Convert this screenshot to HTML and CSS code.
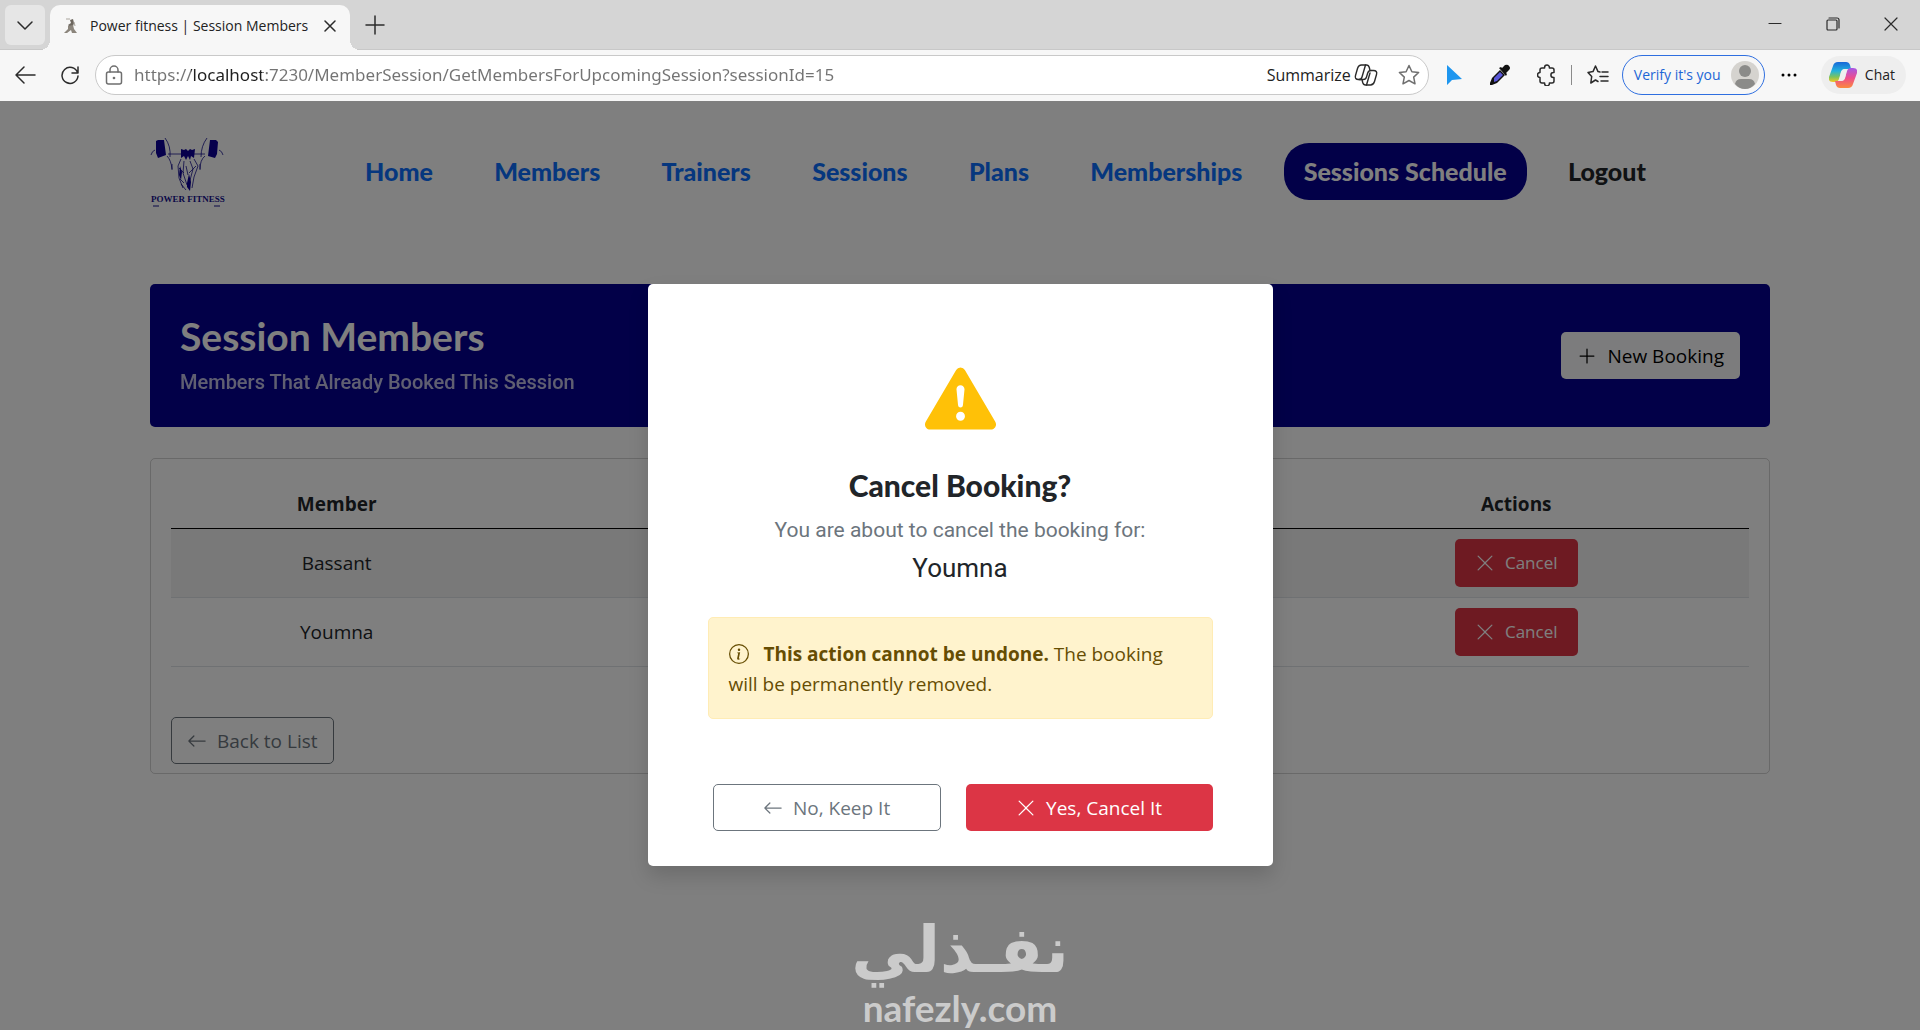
FILE: index.html
```html
<!DOCTYPE html>
<html lang="en">
<head>
    <meta charset="UTF-8">
    <meta name="viewport" content="width=device-width, initial-scale=1.0">
    <title>Power fitness | Session Members</title>
    <link rel="stylesheet" href="styles.css">
</head>
<body>
    <!-- Browser window -->
    <header class="browser">
        <div class="tab-strip">
            <button class="tab-search" aria-label="Search tabs">
                <svg width="18" height="18" viewBox="0 0 18 18" class="line"><path d="M2 6l7 7 7-7"/></svg>
            </button>
            <div class="tab">
                <svg class="favicon" width="16" height="18" viewBox="0 0 16 18">
                    <path d="M7 3l3-1 1 4-1 3-3 1-2-2 3-2z" fill="#6d675f"/>
                    <path d="M5 9l5-1 1 4 3 4H9l-1-3-4 3H1l4-4z" fill="#8b857c"/>
                    <path d="M3 2h4M11 5l1 4" stroke="#a9a49c" fill="none"/>
                </svg>
                <span class="tab-title">Power fitness | Session Members</span>
                <button class="icon-btn tab-close" aria-label="Close tab">
                    <svg width="12" height="12" viewBox="0 0 12 12" class="line"><path d="M1 1l10 10M11 1L1 11"/></svg>
                </button>
            </div>
            <button class="icon-btn new-tab" aria-label="New tab">
                <svg width="20" height="20" viewBox="0 0 20 20" class="line"><path d="M10 1v18M1 10h18"/></svg>
            </button>
            <div class="window-controls">
                <button class="icon-btn" aria-label="Minimize">
                    <svg width="14" height="14" viewBox="0 0 14 14" class="line thin"><path d="M1 6.5h12"/></svg>
                </button>
                <button class="icon-btn" aria-label="Restore">
                    <svg width="14" height="14" viewBox="0 0 14 14" class="line thin"><rect x="1" y="3" width="10" height="10" rx="1"/><path d="M3 1h8q2 0 2 2v8"/></svg>
                </button>
                <button class="icon-btn" aria-label="Close">
                    <svg width="14" height="14" viewBox="0 0 14 14" class="line thin"><path d="M1 1l12 12M13 1L1 13"/></svg>
                </button>
            </div>
        </div>
        <div class="toolbar">
            <button class="icon-btn" aria-label="Back">
                <svg width="22" height="20" viewBox="0 0 22 20" class="line"><path d="M10 2L2 10l8 8M2 10h19"/></svg>
            </button>
            <button class="icon-btn reload" aria-label="Reload">
                <svg width="20" height="20" viewBox="0 0 20 20" class="line"><path d="M17.5 7.5A8 8 0 1 0 18 11M18 2v6h-6"/></svg>
            </button>
            <form class="address-bar">
                <svg width="18" height="20" viewBox="0 0 18 20" class="line grey"><rect x="1.5" y="7" width="15" height="12" rx="2"/><path d="M5 7V5a4 4 0 0 1 8 0v2"/><circle cx="9" cy="13" r=".6"/></svg>
                <input class="url" type="text" aria-label="Address" value="https://localhost:7230/MemberSession/GetMembersForUpcomingSession?sessionId=15">
                <button type="button" class="summarize">Summarize
                    <svg width="24" height="22" viewBox="0 0 24 22" class="line copilot">
                        <path d="M7 15.500H4.500c-2.500 0-3.800-1.300-3-4L3.500 4.500c.7-2.300 2-3.500 4-3.500h5c1.800 0 2.300.8 2.800 2.500l.5 2M17 6.500h2.500c2.500 0 3.800 1.300 3 4l-2 7c-.7 2.300-2 3.500-4 3.500h-5c-1.800 0-2.300-.8-2.800-2.500l-.5-2"/>
                        <path d="M11.500 1L8 13c-.5 1.700-1.200 2.500-3 2.500h4.500c1.600 0 2.500-.7 3-2.500l1.200-4c.5-1.700 1.200-2.500 3.300-2.500M12.500 21L16 9"/>
                    </svg>
                </button>
                <button type="button" class="icon-btn" aria-label="Add to favorites">
                    <svg width="22" height="22" viewBox="0 0 22 22" class="line grey"><path d="M11 1.500l2.900 6.200 6.700.8-4.900 4.600 1.300 6.700-6-3.300-6 3.300 1.300-6.700L1.400 8.500l6.700-.8z"/></svg>
                </button>
            </form>
            <div class="extensions">
                <button class="icon-btn" aria-label="Cursor">
                    <svg width="18" height="22" viewBox="0 0 18 22"><path d="M2 1v20l5-5 10-1z" fill="#1e96ef"/></svg>
                </button>
                <button class="icon-btn" aria-label="Color picker">
                    <svg width="22" height="22" viewBox="0 0 22 22">
                        <path d="M3 14l8-8 5 5-8 8-5 2-2 0 0-2z" fill="#111"/>
                        <path d="M5 14l6-6 3 3-6 6-3 1z" fill="#5a57d8"/>
                        <path d="M10 4l2-1 1 1 3-3q3-1 4 1 2 2 0 4l-3 3 1 1-1 2z" fill="#111"/>
                    </svg>
                </button>
                <button class="icon-btn" aria-label="Extensions">
                    <svg width="20" height="22" viewBox="0 0 20 22" class="line"><path d="M5 4h2.600V3.500a2.400 2.400 0 0 1 4.800 0V4H15a2 2 0 0 1 2 2v2.500h-.6a2.500 2.500 0 0 0 0 5h.6V17a2 2 0 0 1-2 2h-2.600v.5a2.400 2.400 0 0 1-4.800 0V19H5a2 2 0 0 1-2-2v-3.500a2.500 2.500 0 0 1 0-5V6a2 2 0 0 1 2-2z"/></svg>
                </button>
            </div>
            <span class="separator"></span>
            <button class="icon-btn favorites" aria-label="Favorites">
                <svg width="22" height="20" viewBox="0 0 22 20" class="line"><path d="M13 7l-2-.4L8.500 1 6 6.600l-5 .8L4.700 11.500 3.800 18l4.700-3 2.500 1.500M15 7h6M13 11.500h8M14 16h7"/></svg>
            </button>
            <button class="profile">Verify it's you
                <svg width="28" height="28" viewBox="0 0 28 28"><circle cx="14" cy="14" r="14" fill="#d5d3cf"/><circle cx="14" cy="10" r="6" fill="#8b8b89"/><path d="M4 23q1-5 6-5h8q5 0 6 5-4 5-10 5T4 23z" fill="#8b8b89"/></svg>
            </button>
            <button class="icon-btn more" aria-label="Settings and more">
                <svg width="18" height="4" viewBox="0 0 18 4"><circle cx="3" cy="2" r="1.500"/><circle cx="9" cy="2" r="1.500"/><circle cx="15" cy="2" r="1.500"/></svg>
            </button>
            <button class="chat">
                <svg width="28" height="28" viewBox="0 0 28 28">
                    <defs>
                        <linearGradient id="cool" x1="0" y1="0" x2="0" y2="1"><stop offset="0" stop-color="#1767d8"/><stop offset=".45" stop-color="#22b3dd"/><stop offset=".75" stop-color="#7fc35a"/><stop offset="1" stop-color="#f5c823"/></linearGradient>
                        <linearGradient id="warm" x1="0" y1="0" x2="0" y2="1"><stop offset="0" stop-color="#a557e6"/><stop offset=".5" stop-color="#ee4d8c"/><stop offset="1" stop-color="#fb8a3c"/></linearGradient>
                    </defs>
                    <path d="M4 5q1-4 5-4h8q3 0 4 3l1 4h-6q-3 0-4 3l-2 7q-1 3-4 3H4q-5 0-4-5z" fill="url(#cool)"/>
                    <path d="M24 23q-1 4-5 4h-8q-3 0-4-3l-1-4h6q3 0 4-3l2-7q1-3 4-3h2q5 0 4 5z" fill="url(#warm)"/>
                    <path d="M12 11q1-3 4-3h2l-2 9q-1 3-4 3h-2z" fill="#eee"/>
                </svg>
                Chat
            </button>
        </div>
    </header>

    <div class="page">
        <div class="navbar">
            <a href="#" class="logo" aria-label="Power Fitness">
                <svg width="76" height="75" viewBox="0 0 76 75">
                    <path d="M6 7l2-1h6l2 15-8 3-2-5zM60 6h6l2 2-1 12-2 4-7-2z" fill="#0c0098"/>
                    <g fill="none" stroke="#15108f" stroke-width=".8">
                        <path d="M15 4q6 8 5 19M57 4q-6 8-6 19M18 20h13M44 20h11M1 21q1-4 4-5M73 21q-1-4-4-5M17 22q4 4 5 13M55 22q-5 4-5 13M22 30v6M50 30v6"/>
                        <path d="M31 25l-3 7 1 12 4 10M44 25l4 7-4 11-2 11M34 27l-1 12 4 12M40 27l3 8-4 15M29 34l5 5M46 32l-7 7M30 45l4 4M36 32l2 9M31 50l5 6"/>
                    </g>
                    <path d="M31 15l3 1 2-1 2 2 2-2 2 1 3-1-1 9-3-2-1 4-2-4-2 4-2-4-3 2zM37 49l2-9 2 8-1 9-3-4zM30 32l2 6-1 8-2-5z" fill="#0c0098"/>
                    <text x="1" y="68" class="logo-text">POWER FITNESS</text>
                    <path d="M3 72h6M64 72h6" stroke="#15108f"/>
                </svg>
            </a>
            <nav class="nav-links">
                <a href="#">Home</a>
                <a href="#">Members</a>
                <a href="#">Trainers</a>
                <a href="#">Sessions</a>
                <a href="#">Plans</a>
                <a href="#">Memberships</a>
                <a href="#" class="active">Sessions Schedule</a>
                <button class="logout">Logout</button>
            </nav>
        </div>

        <main class="container">
            <section class="banner">
                <div>
                    <h1>Session Members</h1>
                    <p>Members That Already Booked This Session</p>
                </div>
                <a href="#" class="btn btn-light">
                    <svg class="bi" viewBox="0 0 16 16"><path d="M8 2a.5.5 0 0 1 .5.5v5h5a.5.5 0 0 1 0 1h-5v5a.5.5 0 0 1-1 0v-5h-5a.5.5 0 0 1 0-1h5v-5A.5.5 0 0 1 8 2"/></svg>
                    New Booking
                </a>
            </section>

            <section class="card">
                <table class="members">
                    <thead>
                        <tr><th class="col-member">Member</th><th></th><th class="col-actions">Actions</th></tr>
                    </thead>
                    <tbody>
                        <tr>
                            <td>Bassant</td>
                            <td></td>
                            <td><button class="btn btn-danger btn-row">
                                <svg class="bi" viewBox="0 0 16 16"><path d="M2.146 2.854a.5.5 0 1 1 .708-.708L8 7.293l5.146-5.147a.5.5 0 0 1 .708.708L8.707 8l5.147 5.146a.5.5 0 0 1-.708.708L8 8.707l-5.146 5.147a.5.5 0 0 1-.708-.708L7.293 8z"/></svg>
                                Cancel</button></td>
                        </tr>
                        <tr>
                            <td>Youmna</td>
                            <td></td>
                            <td><button class="btn btn-danger btn-row">
                                <svg class="bi" viewBox="0 0 16 16"><path d="M2.146 2.854a.5.5 0 1 1 .708-.708L8 7.293l5.146-5.147a.5.5 0 0 1 .708.708L8.707 8l5.147 5.146a.5.5 0 0 1-.708.708L8 8.707l-5.146 5.147a.5.5 0 0 1-.708-.708L7.293 8z"/></svg>
                                Cancel</button></td>
                        </tr>
                    </tbody>
                </table>
                <a href="#" class="btn btn-outline">
                    <svg class="bi" viewBox="0 0 16 16"><path d="M15 8a.5.5 0 0 0-.5-.5H2.707l3.147-3.146a.5.5 0 1 0-.708-.708l-4 4a.5.5 0 0 0 0 .708l4 4a.5.5 0 0 0 .708-.708L2.707 8.500H14.500A.5.5 0 0 0 15 8"/></svg>
                    Back to List
                </a>
            </section>
        </main>

        <!-- Cancel confirmation -->
        <div class="backdrop">
            <div class="modal" role="dialog" aria-labelledby="cancelTitle">
                <div class="modal-body">
                    <svg class="warning-icon" viewBox="0 0 16 16"><path d="M8.982 1.566a1.130 1.130 0 0 0-1.960 0L.165 13.233c-.457.778.091 1.767.980 1.767h13.713c.889 0 1.438-.990.980-1.767zM8 5c.535 0 .954.462.900.995l-.350 3.507a.552.552 0 0 1-1.100 0L7.100 5.995A.905.905 0 0 1 8 5m.002 6a1 1 0 1 1 0 2 1 1 0 0 1 0-2"/></svg>
                    <h2 id="cancelTitle">Cancel Booking?</h2>
                    <p class="message">You are about to cancel the booking for:</p>
                    <p class="member-name">Youmna</p>
                    <div class="alert">
                        <svg class="bi" viewBox="0 0 16 16"><path d="M8 15A7 7 0 1 1 8 1a7 7 0 0 1 0 14m0 1A8 8 0 1 0 8 0a8 8 0 0 0 0 16"/><path d="m8.930 6.588-2.290.287-.082.380.450.083c.294.070.352.176.288.469l-.738 3.468c-.194.897.105 1.319.808 1.319.545 0 1.178-.252 1.465-.598l.088-.416c-.200.176-.492.246-.686.246-.275 0-.375-.193-.304-.533zM9 4.500a1 1 0 1 1-2 0 1 1 0 0 1 2 0"/></svg>
                        <strong>This action cannot be undone.</strong> The booking will be permanently removed.
                    </div>
                </div>
                <div class="modal-footer">
                    <button class="btn btn-outline">
                        <svg class="bi" viewBox="0 0 16 16"><path d="M15 8a.5.5 0 0 0-.5-.5H2.707l3.147-3.146a.5.5 0 1 0-.708-.708l-4 4a.5.5 0 0 0 0 .708l4 4a.5.5 0 0 0 .708-.708L2.707 8.500H14.500A.5.5 0 0 0 15 8"/></svg>
                        No, Keep It
                    </button>
                    <button class="btn btn-danger">
                        <svg class="bi" viewBox="0 0 16 16"><path d="M2.146 2.854a.5.5 0 1 1 .708-.708L8 7.293l5.146-5.147a.5.5 0 0 1 .708.708L8.707 8l5.147 5.146a.5.5 0 0 1-.708.708L8 8.707l-5.146 5.147a.5.5 0 0 1-.708-.708L7.293 8z"/></svg>
                        Yes, Cancel It
                    </button>
                </div>
            </div>
        </div>

        <div class="watermark">
            <span class="watermark-ar" lang="ar" dir="rtl">نفـذلي</span>
            <span class="watermark-en">nafezly.com</span>
        </div>
    </div>
</body>
</html>
```
FILE: styles.css
```css
* {
    box-sizing: border-box;
}
body {
    margin: 0;
    min-height: 100vh;
    display: flex;
    flex-direction: column;
    font-family: "Open Sans", "Noto Sans", sans-serif;
    font-size: 19px;
    line-height: 30px;
    color: #212529;
    background: #fff;
}
a {
    text-decoration: none;
}
button {
    font: inherit;
    color: inherit;
    border: none;
    background: none;
    padding: 0;
    cursor: pointer;
}
svg {
    display: block;
    flex: none;
}
.line {
    fill: none;
    stroke: #2b2b2b;
    stroke-width: 1.5;
    stroke-linecap: round;
    stroke-linejoin: round;
}
.thin {
    stroke-width: 1.2;
}
.copilot {
    stroke-width: 1.4;
}
.grey {
    stroke: #6f6f6f;
}

/* Browser window */
.browser {
    font-size: 14px;
    line-height: 20px;
    color: #222;
}
.tab-strip {
    display: flex;
    align-items: flex-end;
    height: 50px;
    padding-left: 5px;
    background: #d5d5d5;
    border-bottom: 1px solid #c8c8c8;
}
.tab-search {
    width: 40px;
    height: 40px;
    margin: 0 5px 4px 0;
    display: grid;
    place-items: center;
    border-radius: 6px;
    background: #e6e6e6;
}
.tab {
    position: relative;
    display: flex;
    align-items: center;
    width: 300px;
    height: 45px;
    margin-bottom: -1px;
    padding: 0 14px 4px 13px;
    border-radius: 10px 10px 0 0;
    background: #f7f7f7;
}
.tab::before,
.tab::after {
    content: "";
    position: absolute;
    bottom: 0;
    width: 10px;
    height: 10px;
}
.tab::before {
    left: -10px;
    background: radial-gradient(circle at 0 0, transparent 10px, #f7f7f7 10px);
}
.tab::after {
    right: -10px;
    background: radial-gradient(circle at 100% 0, transparent 10px, #f7f7f7 10px);
}
.tab-title {
    flex: 1;
    margin-left: 11px;
    white-space: nowrap;
}
.icon-btn {
    display: grid;
    place-items: center;
    flex: none;
}
.new-tab {
    margin: 0 0 14px 15px;
}
.window-controls {
    display: flex;
    gap: 44px;
    margin: 0 22px 18px auto;
}
.toolbar {
    display: flex;
    align-items: center;
    height: 51px;
    padding: 0 14px 2px;
    background: #f7f7f7;
}
.reload {
    margin: 0 15px 0 24px;
}
.address-bar {
    flex: 1;
    display: flex;
    align-items: center;
    height: 40px;
    padding: 0 8px 0 9px;
    border: 1px solid #c9c9c9;
    border-radius: 20px;
    background: #fff;
}
.url {
    flex: 1;
    min-width: 0;
    margin-left: 11px;
    padding: 0;
    border: none;
    outline: none;
    font: 17px/24px "Noto Sans", "Open Sans", sans-serif;
    color: transparent;
    /* the host name is darker than the rest of the address */
    background: linear-gradient(to right, #737373 57px, #1f1f1f 57px 128px, #737373 128px);
    -webkit-background-clip: text;
    background-clip: text;
}
.summarize {
    display: flex;
    align-items: center;
    gap: 3px;
    margin-right: 20px;
    font-size: 16px;
}
.extensions {
    display: flex;
    gap: 26px;
    margin: 0 14px 0 16px;
}
.separator {
    width: 1px;
    height: 20px;
    background: #8b8b8b;
}
.favorites {
    margin: 0 13px 0 15px;
}
.profile {
    display: flex;
    align-items: center;
    justify-content: space-between;
    width: 143px;
    height: 40px;
    padding: 0 5px 0 11px;
    border: 1px solid #2f6fe0;
    border-radius: 20px;
    color: #1d66d6;
}
.more {
    margin: 0 23px 0 15px;
}
.chat {
    display: flex;
    align-items: center;
    gap: 8px;
    height: 38px;
    padding: 0 11px 0 8px;
    border-radius: 19px;
    background: #eee;
}

/* Page */
.page {
    position: relative;
    flex: 1;
    overflow: hidden;
}
.navbar {
    display: flex;
    align-items: center;
    height: 141px;
    padding: 0 254px 0 150px;
}
.logo-text {
    font-family: "Liberation Serif", serif;
    font-size: 9px;
    font-weight: 700;
    fill: #15108f;
}
.nav-links {
    flex: 1;
    display: flex;
    align-items: center;
    justify-content: space-between;
    margin-left: 119px;
    font-family: Lato, sans-serif;
    font-size: 25px;
    font-weight: 900;
}
.nav-links a {
    padding: 13px 20px 14px;
    border-radius: 25px;
    color: #0d6efd;
}
.nav-links .active {
    background: #040090;
    color: #fff;
}
.logout {
    padding: 13px 20px 14px;
}
.container {
    margin: 42px 150px 0;
}
.banner {
    display: flex;
    align-items: center;
    justify-content: space-between;
    padding: 30px;
    border-radius: 5px;
    background: #040090;
    color: #fff;
}
.banner h1 {
    margin: 0 0 9px;
    font-family: Lato, sans-serif;
    font-size: 39px;
    font-weight: 700;
    line-height: 44px;
}
.banner p {
    margin: 0;
    font-family: Roboto, sans-serif;
    font-size: 20px;
    font-weight: 500;
    opacity: .75;
}
.btn {
    display: inline-flex;
    align-items: center;
    justify-content: center;
    gap: 10px;
    padding: 8px 15px 7px;
    border: 1px solid transparent;
    border-radius: 5px;
    white-space: nowrap;
}
.bi {
    width: 20px;
    height: 20px;
    fill: currentColor;
}
.btn-light {
    background: #f8f9fa;
    color: #000;
}
.btn-danger {
    background: #dc3545;
    color: #fff;
}
.btn-outline {
    border-color: #6c757d;
    color: #6c757d;
}
.btn-row {
    padding: 8px 19px;
    font-size: 17px;
}
.card {
    margin-top: 31px;
    padding: 20px 20px 9px;
    border: 1px solid rgba(0, 0, 0, .175);
    border-radius: 5px;
}
.members {
    width: 100%;
    margin-bottom: 50px;
    border-collapse: collapse;
    table-layout: fixed;
    text-align: center;
}
.members th {
    padding: 10px 10px 9px;
    border-bottom: 1px solid #000;
}
.members td {
    padding: 10px;
    border-bottom: 1px solid #dee2e6;
}
.members tbody tr:nth-child(odd) {
    background: #f2f2f2;
}
.members .btn {
    vertical-align: top;
}
.col-member {
    width: 21%;
}
.col-actions {
    width: 29.5%;
}

/* Modal */
.backdrop {
    position: absolute;
    inset: 0;
    display: flex;
    align-items: flex-start;
    justify-content: center;
    padding-top: 183px;
    background: rgba(0, 0, 0, .5);
}
.modal {
    width: 625px;
    border-radius: 5px;
    background: #fff;
    box-shadow: 0 10px 20px rgba(0, 0, 0, .15);
}
.modal-body {
    padding: 79px 60px 0;
    text-align: center;
}
.warning-icon {
    width: 71px;
    height: 71px;
    margin: 0 auto 31px;
    fill: #ffc107;
}
.modal h2 {
    margin: 0 0 10px;
    font-family: Lato, sans-serif;
    font-size: 30px;
    font-weight: 900;
    line-height: 40px;
}
.message {
    margin: 0 0 4px;
    font-family: Roboto, sans-serif;
    font-size: 21px;
    color: #6c757d;
}
.member-name {
    margin: 0 0 30px;
    font-family: Roboto, sans-serif;
    font-size: 26px;
    line-height: 38px;
}
.alert {
    padding: 21px 20px 19px;
    border: 1px solid #ffecb5;
    border-radius: 5px;
    background: #fff3cd;
    color: #664d03;
    text-align: left;
}
.alert .bi {
    display: inline-block;
    margin-right: 10px;
    vertical-align: -3px;
}
.modal-footer {
    display: flex;
    gap: 25px;
    padding: 65px 60px 35px 65px;
}
.modal-footer .btn {
    flex: 1 1 auto;
}

.watermark {
    position: absolute;
    bottom: 0;
    left: 0;
    right: 0;
    display: flex;
    flex-direction: column;
    align-items: center;
    color: #cbcbcb;
    pointer-events: none;
}
.watermark-ar {
    font: 700 64px/70px "DejaVu Sans", sans-serif;
}
.watermark-en {
    font: 700 37px/45px Lato, sans-serif;
}
```
